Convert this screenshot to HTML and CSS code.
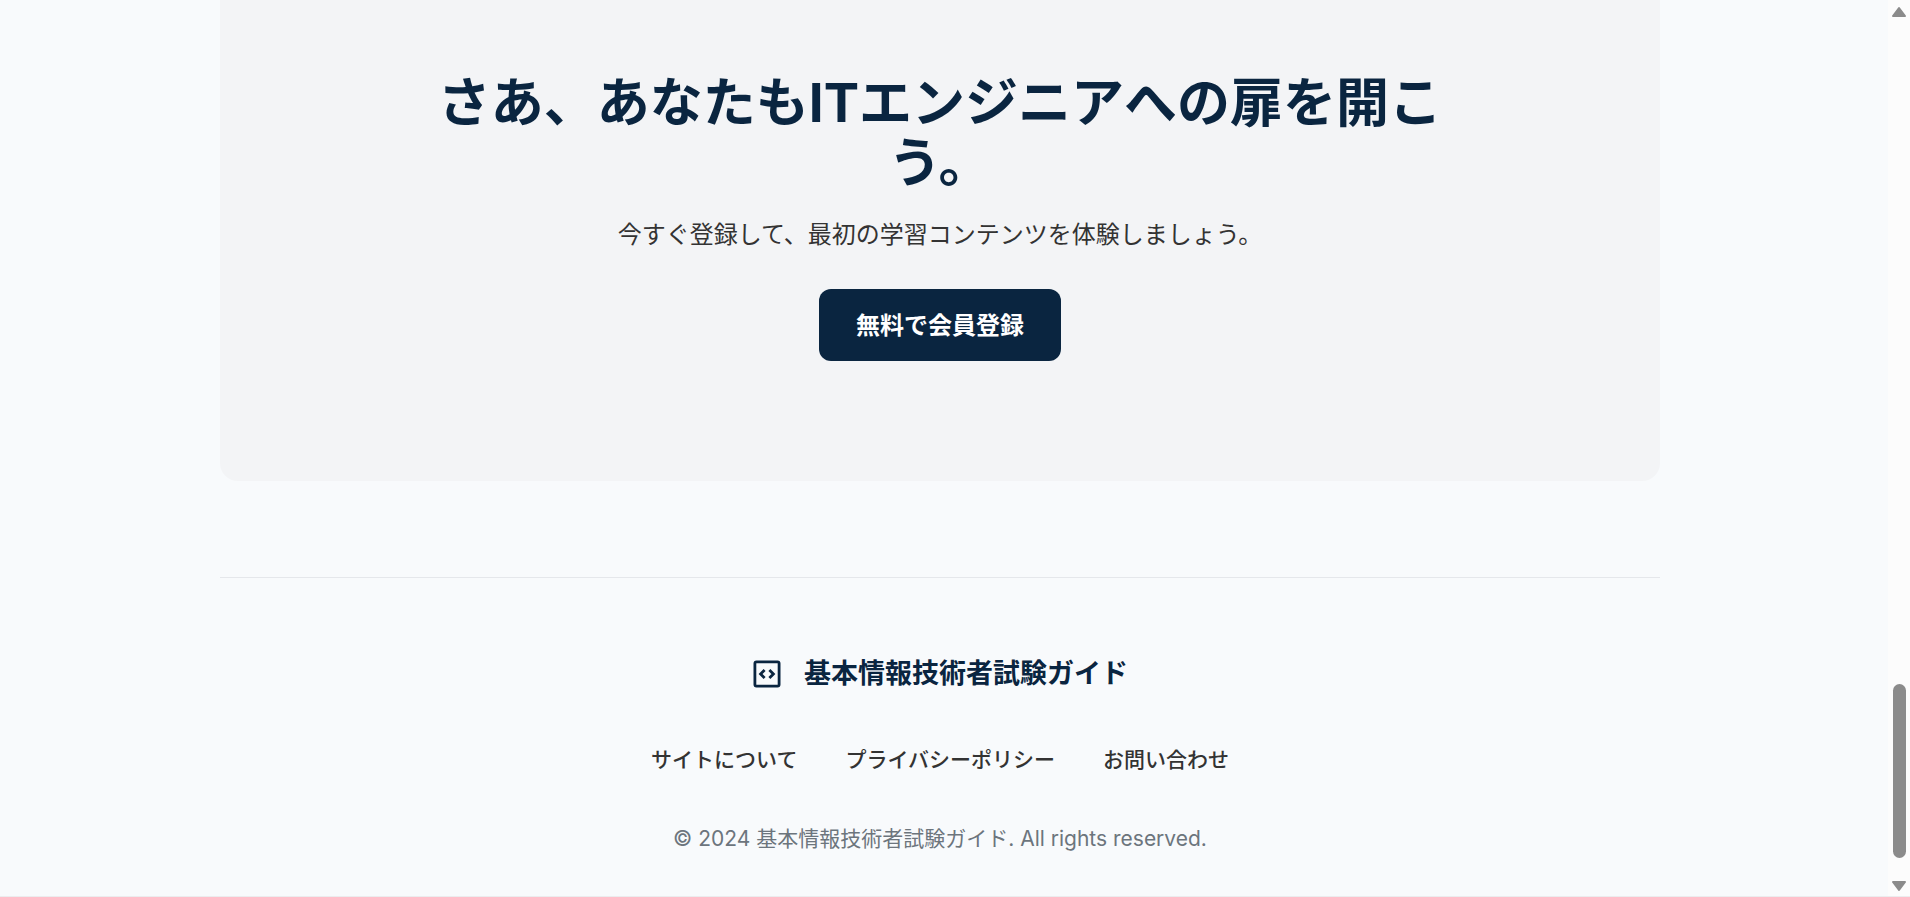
FILE: index.html
```
<!DOCTYPE html>
<html lang="ja">
<head>
<meta charset="utf-8">
<title>基本情報技術者試験ガイド</title>
<link rel="stylesheet" href="styles.css">
</head>
<body>
<div class="page">
  <main class="content">
    <section class="cta">
      <h1 class="cta-title">さあ、あなたもITエンジニアへの扉を開こう。</h1>
      <p class="cta-text">今すぐ登録して、最初の学習コンテンツを体験しましょう。</p>
      <button class="cta-button" type="button">無料で会員登録</button>
    </section>
    <footer class="footer">
      <div class="brand">
        <svg class="brand-icon" viewBox="0 0 30 30" fill="none" stroke="currentColor" stroke-width="2.8" aria-hidden="true">
          <rect x="2.9" y="2.9" width="24.2" height="24.2" rx="1.6"/>
          <path d="M12.6 11 8.6 15l4 4M17.4 11l4 4-4 4"/>
        </svg>
        <h2 class="brand-name">基本情報技術者試験ガイド</h2>
      </div>
      <nav class="links">
        <a href="#">サイトについて</a>
        <a href="#">プライバシーポリシー</a>
        <a href="#">お問い合わせ</a>
      </nav>
      <p class="copyright">© 2024 基本情報技術者試験ガイド. All rights reserved.</p>
    </footer>
  </main>
  <div class="scrollbar" aria-hidden="true">
    <svg class="arrow" viewBox="0 0 16 12"><path d="M8 2 14 10H2Z"/></svg>
    <div class="track"><div class="thumb"></div></div>
    <svg class="arrow" viewBox="0 0 16 12"><path d="M8 10 2 2H14Z"/></svg>
  </div>
</div>
</body>
</html>
```
FILE: styles.css
```
* { box-sizing: border-box; }
body {
  margin: 0;
  background: #f8fafc;
  color: #333;
  font-family: Inter, "Noto Sans CJK JP", sans-serif;
}
h1, h2, p { margin: 0; }
.page {
  display: flex;
  min-height: 100vh;
  border-bottom: 1px solid #ececee;
}
.content {
  flex: 1;
  padding: 0 228px 0 220px;
}
.cta {
  display: flex;
  flex-direction: column;
  align-items: center;
  padding: 73px 48px 120px;
  border-radius: 0 0 18px 18px;
  background: #f3f4f6;
  text-align: center;
}
.cta-title {
  max-width: 1040px;
  color: #0a2540;
  font-size: 53px;
  font-weight: 700;
  line-height: 60px;
}
.cta-text {
  margin-top: 24px;
  font-size: 24px;
  line-height: 36px;
}
.cta-button {
  height: 72px;
  margin-top: 36px;
  padding: 0 37px 4px;
  border: 0;
  border-radius: 12px;
  background: #0a2540;
  color: #fff;
  font: inherit;
  font-size: 24px;
  font-weight: 700;
}
.footer {
  display: flex;
  flex-direction: column;
  align-items: center;
  margin-top: 96px;
  padding-top: 78px;
  border-top: 1px solid #e5e7eb;
}
.brand {
  display: flex;
  align-items: center;
  gap: 22px;
  color: #0a2540;
}
.brand-icon { width: 30px; height: 30px; }
.brand-name {
  font-size: 27px;
  font-weight: 700;
  line-height: 36px;
}
.links {
  display: flex;
  gap: 48px;
  margin-top: 52px;
}
.links a {
  color: #333;
  font-size: 21px;
  font-weight: 500;
  line-height: 32px;
  text-decoration: none;
}
.copyright {
  margin-top: 47px;
  color: #6c757d;
  font-size: 21px;
  line-height: 32px;
}
.scrollbar {
  display: flex;
  flex-direction: column;
  align-items: center;
  width: 22px;
  padding: 6px 0 4px;
  background: #fcfcfc;
}
.arrow {
  width: 16px;
  height: 12px;
  fill: #8b8b8b;
  stroke: #8b8b8b;
  stroke-width: 2;
  stroke-linejoin: round;
}
.track {
  display: flex;
  flex: 1;
  flex-direction: column;
  justify-content: flex-end;
  padding-bottom: 22px;
}
.thumb {
  width: 13px;
  height: 174px;
  border-radius: 7px;
  background: #8b8b8b;
}
```
